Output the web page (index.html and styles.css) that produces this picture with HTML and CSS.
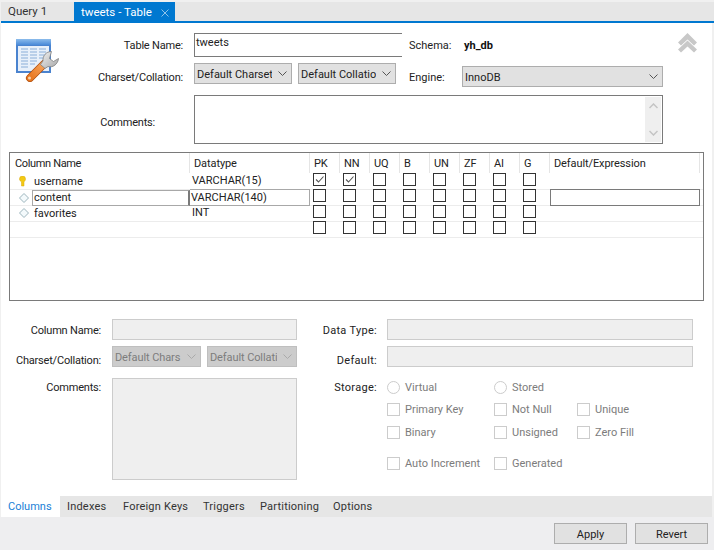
FILE: index.html
```html
<!DOCTYPE html>
<html lang="en">
<head>
<meta charset="utf-8">
<title>tweets - Table</title>
<link rel="stylesheet" href="styles.css">
</head>
<body>
<div class="app">
  <nav class="doc-tabs">
    <div class="doc-tab">Query 1</div>
    <div class="doc-tab active"><span>tweets - Table</span>
      <svg class="close" width="8" height="8" viewBox="0 0 8 8"><path d="M.5.500l7 7M7.500.500l-7 7" stroke="#8fc3ea" fill="none"/></svg>
    </div>
  </nav>
  <main class="page">
    <section class="top">
      <svg class="table-icon" width="44" height="44" viewBox="0 0 44 44">
        <defs>
          <linearGradient id="wr" x1="0" y1="1" x2="1" y2="0"><stop offset="0" stop-color="#e8761f"/><stop offset="1" stop-color="#f6a45c"/></linearGradient>
          <linearGradient id="hd" x1="0" y1="0" x2="0" y2="1"><stop offset="0" stop-color="#8cbcec"/><stop offset="1" stop-color="#4a8ad8"/></linearGradient>
          <linearGradient id="sp" x1="0" y1="0" x2="1" y2="1"><stop offset="0" stop-color="#f2f2f2"/><stop offset="1" stop-color="#a6a6a6"/></linearGradient>
        </defs>
        <rect x="1" y="1" width="35" height="34" fill="#4a83cf"/>
        <rect x="1" y="1" width="35" height="6" fill="url(#hd)"/>
        <rect x="3" y="8" width="31" height="25" fill="#e8f0fa"/>
        <path d="M6 11h7M15 11h7M24 11h7M6 14h7M15 14h7M24 14h7M6 17h7M15 17h7M24 17h7M6 20h7M15 20h7M24 20h7M6 23h7M15 23h7M6 26h7M15 26h5M6 29h7" stroke="#a9c3e4" stroke-width="1.600"/>
        <path d="M15 40L29 26" stroke="#b2500f" stroke-width="8" stroke-linecap="round"/>
        <path d="M15 40L29 26" stroke="url(#wr)" stroke-width="6.400" stroke-linecap="round"/>
        <circle cx="14.500" cy="40" r="1.500" fill="#f7d2a8"/>
        <path d="M36.500 13.500C31 13.500 27.500 18 28 23L25.500 26.500 30 30.500 33 28.500C38 30 43 26 43.500 20.500L38.500 23.500 34.500 20.500z" fill="url(#sp)" stroke="#7f7f7f" stroke-width=".8" stroke-linejoin="round"/>
      </svg>
      <label class="top-label name-label tight">Table Name:</label>
      <div class="row row-name">
        <div class="name-input">tweets</div>
        <span class="side-label schema-label">Schema:</span>
        <b class="schema-value">yh_db</b>
        <svg class="collapse" width="19" height="20" viewBox="0 0 19 20"><path d="M0 9.500L9.500 0 19 9.500l-3 3-6.500-6-6.500 6zM0 16.500L9.500 7.500 19 16.500l-3 3-6.500-6-6.500 6z" fill="#c8c8c8"/></svg>
      </div>
      <label class="top-label charset-label tight">Charset/Collation:</label>
      <div class="row row-charset">
        <div class="select w98"><span class="select-text">Default Charset</span><svg class="chev" width="9" height="6" viewBox="0 0 9 6"><path d="M.5.500L4.500 4.500 8.500.500" fill="none" stroke="#555"/></svg></div>
        <div class="select w98 second"><span class="select-text">Default Collation</span><svg class="chev" width="9" height="6" viewBox="0 0 9 6"><path d="M.5.500L4.500 4.500 8.500.500" fill="none" stroke="#555"/></svg></div>
        <span class="side-label engine-label">Engine:</span>
        <div class="select engine"><span class="select-text">InnoDB</span><svg class="chev" width="9" height="6" viewBox="0 0 9 6"><path d="M.5.500L4.500 4.500 8.500.500" fill="none" stroke="#555"/></svg></div>
      </div>
      <label class="top-label comments-label tight">Comments:</label>
      <div class="comments">
        <div class="scroll">
          <svg width="9" height="6" viewBox="0 0 9 6"><path d="M.5 5L4.500 1 8.500 5" fill="none" stroke="#c4c4c4" stroke-width="1.500"/></svg>
          <svg width="9" height="6" viewBox="0 0 9 6"><path d="M.5 1L4.500 5 8.500 1" fill="none" stroke="#c4c4c4" stroke-width="1.500"/></svg>
        </div>
      </div>
    </section>

    <section class="columns-box">
      <div class="head-row">
        <div class="hc first">Column Name</div><div class="hc">Datatype</div>
        <div class="hc">PK</div><div class="hc">NN</div><div class="hc">UQ</div><div class="hc">B</div><div class="hc">UN</div><div class="hc">ZF</div><div class="hc">AI</div><div class="hc">G</div>
        <div class="hc">Default/Expression</div>
      </div>
      <div class="data-row">
        <div class="name-cell"><svg class="key" width="7" height="11" viewBox="0 0 7 11"><path d="M.5 3a3 3 0 0 1 6 0c0 1.600-1 2-1.500 3v4h-2.500V6C1.500 5 .5 4.600 .5 3z" fill="#f3c913" stroke="#d8a80c" stroke-width=".5"/></svg><span>username</span></div>
        <div class="type-cell">VARCHAR(15)</div>
        <div class="cb-cell"><span class="cb"><svg width="11" height="11" viewBox="0 0 11 11"><path d="M2 5.500L4.500 8 9.500 2.500" fill="none" stroke="#555" stroke-width="1.100"/></svg></span></div>
        <div class="cb-cell"><span class="cb"><svg width="11" height="11" viewBox="0 0 11 11"><path d="M2 5.500L4.500 8 9.500 2.500" fill="none" stroke="#555" stroke-width="1.100"/></svg></span></div>
        <div class="cb-cell"><span class="cb"></span></div><div class="cb-cell"><span class="cb"></span></div><div class="cb-cell"><span class="cb"></span></div><div class="cb-cell"><span class="cb"></span></div><div class="cb-cell"><span class="cb"></span></div><div class="cb-cell"><span class="cb"></span></div>
        <div></div>
      </div>
      <div class="data-row">
        <div class="name-cell editing"><svg class="diamond" width="10" height="10" viewBox="0 0 10 10"><path d="M5 .5L9.500 5 5 9.500 .5 5z" fill="#f4fafc" stroke="#9cb4bc"/></svg><span class="edit-box">content</span></div>
        <div class="type-cell edit-type">VARCHAR(140)</div>
        <div class="cb-cell"><span class="cb"></span></div><div class="cb-cell"><span class="cb"></span></div><div class="cb-cell"><span class="cb"></span></div><div class="cb-cell"><span class="cb"></span></div><div class="cb-cell"><span class="cb"></span></div><div class="cb-cell"><span class="cb"></span></div><div class="cb-cell"><span class="cb"></span></div><div class="cb-cell"><span class="cb"></span></div>
        <div class="edit-default"></div>
      </div>
      <div class="data-row">
        <div class="name-cell"><svg class="diamond" width="10" height="10" viewBox="0 0 10 10"><path d="M5 .5L9.500 5 5 9.500 .5 5z" fill="#f4fafc" stroke="#9cb4bc"/></svg><span>favorites</span></div>
        <div class="type-cell">INT</div>
        <div class="cb-cell"><span class="cb"></span></div><div class="cb-cell"><span class="cb"></span></div><div class="cb-cell"><span class="cb"></span></div><div class="cb-cell"><span class="cb"></span></div><div class="cb-cell"><span class="cb"></span></div><div class="cb-cell"><span class="cb"></span></div><div class="cb-cell"><span class="cb"></span></div><div class="cb-cell"><span class="cb"></span></div>
        <div></div>
      </div>
      <div class="data-row">
        <div></div><div></div>
        <div class="cb-cell"><span class="cb"></span></div><div class="cb-cell"><span class="cb"></span></div><div class="cb-cell"><span class="cb"></span></div><div class="cb-cell"><span class="cb"></span></div><div class="cb-cell"><span class="cb"></span></div><div class="cb-cell"><span class="cb"></span></div><div class="cb-cell"><span class="cb"></span></div><div class="cb-cell"><span class="cb"></span></div>
        <div></div>
      </div>
      <div class="end-line"></div>
    </section>

    <section class="details">
      <div class="detail-left">
        <div class="d-row h21"><label class="d-label tight">Column Name:</label><div class="dis-input w185"></div></div>
        <div class="d-row h21 gap6"><label class="d-label tight">Charset/Collation:</label>
          <div class="dis-select w89"><span class="select-text">Default Chars</span><svg class="chev" width="9" height="6" viewBox="0 0 9 6"><path d="M.5.500L4.500 4.500 8.500.500" fill="none" stroke="#aaa"/></svg></div>
          <div class="dis-select w90"><span class="select-text">Default Collati</span><svg class="chev" width="9" height="6" viewBox="0 0 9 6"><path d="M.5.500L4.500 4.500 8.500.500" fill="none" stroke="#aaa"/></svg></div>
        </div>
        <div class="d-row comments-row"><label class="d-label tight">Comments:</label><div class="dis-area"></div></div>
      </div>
      <div class="detail-right">
        <div class="r-row h21"><label class="r-label">Data Type:</label><div class="dis-input w306"></div></div>
        <div class="r-row h21 gap6"><label class="r-label">Default:</label><div class="dis-input w306"></div></div>
        <div class="storage">
          <label class="r-label storage-label">Storage:</label>
          <div class="options">
            <div class="opt"><span class="radio"></span>Virtual</div>
            <div class="opt"><span class="radio"></span>Stored</div>
            <div></div>
            <div class="opt"><span class="box"></span>Primary Key</div>
            <div class="opt"><span class="box"></span>Not Null</div>
            <div class="opt"><span class="box"></span>Unique</div>
            <div class="opt"><span class="box"></span>Binary</div>
            <div class="opt"><span class="box"></span>Unsigned</div>
            <div class="opt"><span class="box"></span>Zero Fill</div>
            <div class="opt"><span class="box"></span>Auto Increment</div>
            <div class="opt"><span class="box"></span>Generated</div>
          </div>
        </div>
      </div>
    </section>

    <nav class="sub-tabs">
      <div class="sub-tab active">Columns</div>
      <div class="sub-tab w56">Indexes</div>
      <div class="sub-tab w80">Foreign Keys</div>
      <div class="sub-tab w57">Triggers</div>
      <div class="sub-tab w73">Partitioning</div>
      <div class="sub-tab">Options</div>
    </nav>
  </main>
  <footer class="actions">
    <button class="btn">Apply</button>
    <button class="btn">Revert</button>
  </footer>
</div>
</body>
</html>
```

FILE: styles.css
```css
* { box-sizing: border-box; }
html, body { margin: 0; padding: 0; }
body {
  width: 714px;
  height: 550px;
  overflow: hidden;
  background: #f0f0f0;
  font-family: Roboto, "Noto Sans", sans-serif;
  font-size: 11px;
  color: #222;
}
.app { display: flex; flex-direction: column; height: 550px; }
.tight { letter-spacing: -.2px; }

.doc-tabs {
  display: flex;
  height: 23px;
  margin-left: 1px;
  padding-top: 2px;
  background: #e6e6e6;
  border-bottom: 2px solid #0078d0;
  box-shadow: inset 0 2px 0 #f0f0f0;
}
.doc-tab { width: 73px; height: 21px; padding: 1px 0 0 7px; line-height: 17px; font-size: 11.500px; color: #333; }
.doc-tab.active { display: flex; align-items: center; padding: 0 0 0 7px; width: 101px; height: 21px; background: #0078d0; color: #fff; }
.close { margin-left: 9px; margin-top: 1px; }

.page { flex: 1; margin: 0 2px 0 1px; background: #fff; display: flex; flex-direction: column; }

.top {
  display: grid;
  grid-template-columns: 43px 125px 1fr;
  grid-template-rows: 24px 24px 49px;
  row-gap: 6px;
  padding: 10px 9px 0 14px;
}
.top > .comments { margin-top: 2px; }
.table-icon { grid-column: 1 / 3; grid-row: 1 / 3; margin-top: 5px; }
.top-label { text-align: right; line-height: 24px; padding-top: 1px; }
.name-label { grid-column: 2; grid-row: 1; }
.charset-label { grid-column: 2; grid-row: 2; padding-top: 3px; }
.comments-label { grid-column: 1 / 3; grid-row: 3; padding: 18px 28px 0 0; }
.row { grid-column: 3; margin-left: 11px; display: flex; align-items: flex-start; }
.row-name { grid-row: 1; align-items: center; }
.row-charset { grid-row: 2; }
.name-input {
  width: 208px; height: 24px; padding: 1px 0 0 1px; line-height: 16px;
  border: 1px solid #7a7a7a; border-right: 0;
}
.side-label { width: 55px; margin-left: 7px; }
.schema-value { font-weight: 700; color: #111; }
.collapse { margin-left: auto; margin-right: 6px; margin-top: -4px; }
.select {
  height: 21px; display: flex; align-items: center; justify-content: space-between;
  padding: 1px 4px 0 2px; background: #e1e1e1; border: 1px solid #adadad;
}
.select-text { white-space: nowrap; overflow: hidden; flex: 1; min-width: 0; }
.chev { flex: none; margin-left: 6px; }
.w98 { width: 98px; }
.second { margin-left: 6px; }
.engine-label { width: 53px; margin-left: 13px; line-height: 24px; padding-top: 3px; }
.engine { width: 201px; margin-top: 3px; }
.comments {
  grid-column: 3; grid-row: 3; margin-left: 11px; width: 469px; height: 49px;
  border: 1px solid #7a7a7a; padding: 1px; display: flex; justify-content: flex-end;
}
.scroll {
  width: 16px; background: #efefef; display: flex; flex-direction: column;
  align-items: center; justify-content: space-between; padding: 6px 0;
}

.columns-box {
  margin: 10px 0 0 8px; width: 695px; height: 149px;
  border: 1px solid #7a7a7a;
}
.head-row, .data-row {
  display: grid;
  grid-template-columns: 180px 120px repeat(8, 30px) 150px;
}
.head-row { height: 20px; }
.hc { padding: 1px 0 0 4px; line-height: 19px; letter-spacing: -.1px; border-right: 1px solid #e5e5e5; }
.hc.first { padding-left: 5px; letter-spacing: -.35px; }
.data-row { height: 16px; box-shadow: inset 0 1px 0 #ececec; line-height: 15px; }
.data-row:nth-of-type(2) { box-shadow: none; }
.end-line { height: 1px; background: #ececec; }
.name-cell { display: flex; align-items: center; }
.name-cell span { padding-left: 8px; }
.name-cell .key { margin-left: 9px; }
.name-cell .diamond { margin-left: 9px; margin-right: -3px; flex: none; }
.name-cell.editing { align-items: center; }
.edit-box {
  flex: 1; height: 16px; line-height: 13px; margin-left: 6px;
  padding-left: 1px !important; border: 1px solid #a8a8a8;
  border-right: 2px solid #7a7a7a;
}
.type-cell { padding-left: 2px; }
.edit-type { border: 1px solid #a8a8a8; border-left: 0; padding-left: 1px; }
.cb-cell { padding-left: 3px; }
.cb { display: block; width: 13px; height: 13px; border: 1px solid #333; background: #fff; }
.cb svg { display: block; }
.edit-default { border: 1px solid #7a7a7a; }

.details { display: flex; margin-top: 18px; height: 177px; }
.detail-left { width: 296px; }
.d-row { display: flex; }
.h21 { height: 21px; }
.gap6 { margin-top: 6px; }
.d-label { width: 100px; text-align: right; margin-right: 11px; line-height: 22px; padding-top: 1px; }
.gap6 .d-label, .gap6 .r-label { padding-top: 4px; }
.gap6 .dis-select + .dis-select { margin-left: 6px; }
.dis-input { background: #efefef; border: 1px solid #ccc; height: 21px; }
.w185 { width: 185px; }
.w306 { width: 306px; }
.dis-select {
  height: 21px; display: flex; align-items: center; padding: 1px 4px 0 2px;
  background: #ccc; border: 1px solid #bfbfbf; color: #7c7c7c; letter-spacing: -.1px;
}
.w89 { width: 89px; }
.w90 { width: 90px; }
.comments-row { margin-top: 11px; }
.comments-row .d-label { line-height: 17px; }
.dis-area { width: 185px; height: 102px; background: #efefef; border: 1px solid #ccc; }

.detail-right { width: 396px; }
.r-row { display: flex; }
.r-label { width: 80px; margin-right: 10px; text-align: right; line-height: 22px; padding-top: 1px; letter-spacing: .3px; }
.storage { display: flex; margin-top: 11px; }
.storage-label { line-height: 17px; }
.options {
  display: grid;
  grid-template-columns: 107px 83px 1fr;
  grid-template-rows: 22px 23px 31px 17px;
  color: #7c7c7c;
}
.opt { display: flex; align-items: flex-start; line-height: 17px; height: 18px; padding-top: 1px; }
.radio, .box { flex: none; width: 13px; height: 13px; margin: 2px 5px 0 0; background: #fff; border: 1px solid #ccc; }
.radio { border-radius: 50%; }

.sub-tabs { display: flex; margin-top: auto; height: 21px; background: #e6e6e6; color: #333; letter-spacing: .2px; }
.sub-tab { line-height: 20px; padding: 1px 0 0 7px; }
.sub-tab.active { background: #fff; color: #1a7fd6; width: 59px; letter-spacing: 0; }
.w56 { width: 56px; }
.w80 { width: 80px; }
.w57 { width: 57px; }
.w73 { width: 73px; }
.actions { height: 33px; padding: 6px 6px 0 0; display: flex; justify-content: flex-end; gap: 8px; background: #eeeef0; }
.btn {
  width: 73px; height: 21px; padding: 1px 0 0; background: #e1e1e1; border: 1px solid #adadad;
  font: inherit; color: #222;
}
```
